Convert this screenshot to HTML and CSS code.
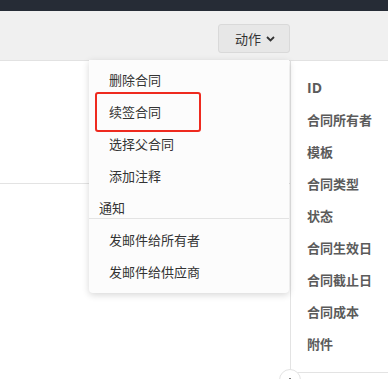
FILE: index.html
```html
<!DOCTYPE html>
<html lang="zh">
<head>
<meta charset="utf-8">
<link rel="stylesheet" href="styles.css">
</head>
<body>
<div class="topbar"></div>
<div class="toolbar">
  <button class="action-btn">动作
    <svg class="chev" width="9" height="6" viewBox="0 0 9 6"><path d="M1 1l3.5 3.5L8 1" fill="none" stroke="#333" stroke-width="1.8"/></svg>
  </button>
</div>
<div class="main">
  <div class="content">
    <div class="content-box"></div>
  </div>
  <div class="side">
    <div class="side-list">
      <div class="field id">ID</div>
      <div class="field">合同所有者</div>
      <div class="field">模板</div>
      <div class="field">合同类型</div>
      <div class="field">状态</div>
      <div class="field">合同生效日</div>
      <div class="field">合同截止日</div>
      <div class="field">合同成本</div>
      <div class="field">附件</div>
    </div>
  </div>
  <div class="knob"><span class="dot"></span></div>
  <div class="menu">
    <div class="menu-group">
      <div class="item">删除合同</div>
      <div class="item">续签合同</div>
      <div class="item">选择父合同</div>
      <div class="item">添加注释</div>
    </div>
    <div class="menu-header">通知</div>
    <div class="menu-group second">
      <div class="item">发邮件给所有者</div>
      <div class="item">发邮件给供应商</div>
    </div>
    <div class="highlight"></div>
  </div>
</div>
</body>
</html>
```
FILE: styles.css
```css
* { box-sizing: border-box; }
html, body { margin: 0; padding: 0; }
body {
  font-family: "Noto Sans CJK SC", "Noto Sans", sans-serif;
  font-size: 13px;
  color: #333;
  background: #fff;
  width: 388px;
  height: 379px;
  overflow: hidden;
}
.topbar { height: 11px; background: #262c36; }
.toolbar {
  height: 50px;
  background: #f0f0f0;
  border-bottom: 1px solid #e2e2e2;
  display: flex;
  justify-content: flex-end;
  align-items: flex-start;
  padding: 13px 98px 0 0;
}
.action-btn {
  width: 72px;
  height: 29px;
  border: 1px solid #d9d9d9;
  border-radius: 3px;
  background: #e7e7e7;
  font-family: inherit;
  font-size: 13px;
  color: #333;
  display: flex;
  align-items: center;
  justify-content: center;
  gap: 5px;
  padding: 0 0 0 2px;
}
.chev { margin-top: 1px; }
.main {
  position: relative;
  display: flex;
  height: 318px;
}
.content { flex: 1; }
.content-box { height: 123px; border-bottom: 1px solid #e3e3e3; }
.side {
  width: 98px;
  border-left: 1px solid #e3e3e3;
  height: 312px;
  border-bottom: 1px solid #e3e3e3;
}
.side-list { padding: 11px 0 0 16px; }
.field {
  height: 32px;
  line-height: 32px;
  font-weight: 700;
  color: #5b5b5b;
  white-space: nowrap;
}
.field.id { font-family: "Open Sans", "Noto Sans", sans-serif; font-size: 14px; }
.knob {
  position: absolute;
  left: 279px;
  top: 308px;
  width: 22px;
  height: 22px;
  border-radius: 50%;
  background: #fff;
  border: 1px solid #e3e3e3;
  display: flex;
  justify-content: center;
  align-items: center;
}
.dot { width: 2px; height: 2px; background: #555; border-radius: 1px; margin-top: -2px; }
.menu {
  position: absolute;
  left: 89px;
  top: -1px;
  width: 200px;
  background: #fcfcfc;
  border-radius: 0 0 4px 4px;
  box-shadow: 0 2px 7px rgba(0,0,0,0.16);
  padding: 4px 0 5px;
}
.item {
  height: 32px;
  line-height: 32px;
  padding-left: 20px;
  color: #333;
  white-space: nowrap;
}
.menu-header {
  padding: 6px 10px 1px;
  line-height: 19px;
  color: #333;
  border-bottom: 1px solid #e3e3e3;
}
.menu-group.second { padding-top: 5px; }
.highlight {
  position: absolute;
  left: 6px;
  top: 32px;
  width: 106px;
  height: 40px;
  border: 2px solid #ee2a1f;
  border-radius: 3px;
}
```
